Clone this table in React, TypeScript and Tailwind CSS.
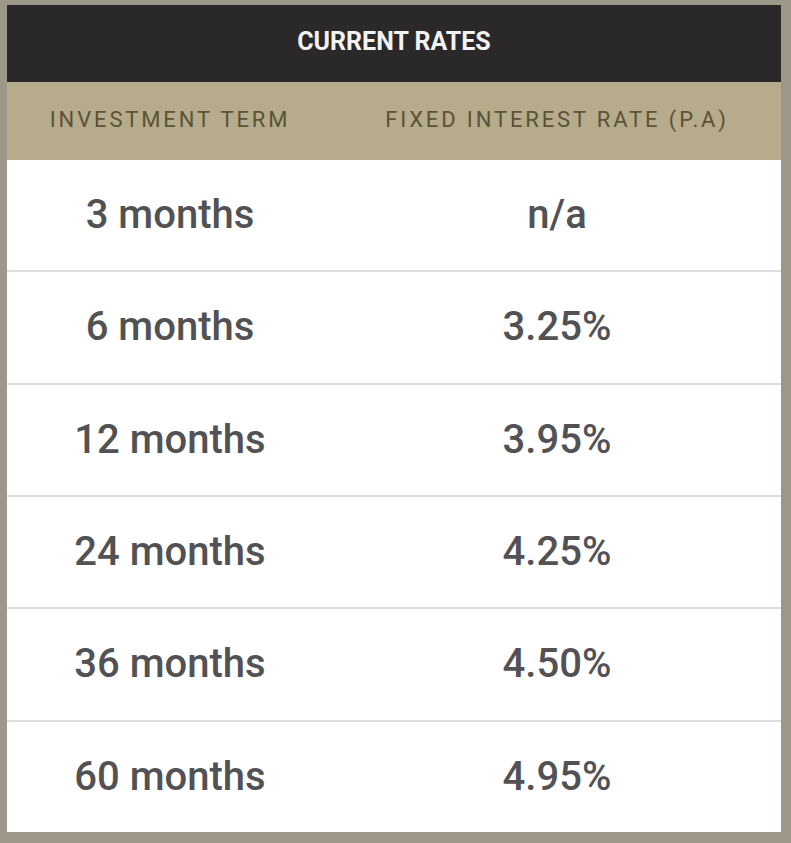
const rates = [
    { term: '3 months', rate: 'n/a' },
    { term: '6 months', rate: '3.25%' },
    { term: '12 months', rate: '3.95%' },
    { term: '24 months', rate: '4.25%' },
    { term: '36 months', rate: '4.50%' },
    { term: '60 months', rate: '4.95%' },
];

export default function App() {
    return (
        <main className="h-[843px] w-[791px] bg-[#9d9788] pt-[5px] pr-[10px] pb-[11px] pl-[7px] font-['Roboto',sans-serif]">
            <section className="flex h-full flex-col bg-white">
                <div className="flex h-[77px] items-center justify-center bg-[#2a2829] pb-[4px] text-[25px] font-bold text-[#f2f2f2]">
                    CURRENT RATES
                </div>
                <div className="flex h-[78px] items-center bg-[#b6ab8b] pb-[4px] text-[22px] tracking-[0.13em] text-[#5b5237]">
                    <div className="w-[326px] text-center">INVESTMENT TERM</div>
                    <div className="flex-1 text-center">
                        FIXED INTEREST RATE (P.A)
                    </div>
                </div>
                <div className="flex flex-1 flex-col divide-y-2 divide-[#dcdcdc]">
                    {rates.map((row) => (
                        <div
                            key={row.term}
                            className="flex flex-1 items-center text-[40px] font-medium text-[#525254]"
                        >
                            <div className="w-[326px] text-center">
                                {row.term}
                            </div>
                            <div className="flex-1 text-center">{row.rate}</div>
                        </div>
                    ))}
                </div>
            </section>
        </main>
    );
}
